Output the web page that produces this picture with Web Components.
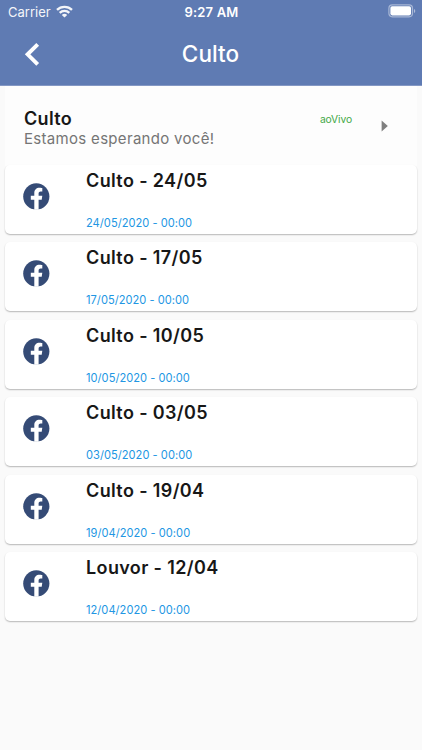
<!DOCTYPE html>
<html lang="pt-BR">
<head>
<meta charset="utf-8">
<title>Culto</title>
<style>
html,body{margin:0;height:100%;overflow:hidden;background:#fafafa;font-family:Inter,"Liberation Sans",sans-serif}
</style>
</head>
<body>
<culto-app></culto-app>
<script>
const define = (name, html, setup) => customElements.define(name, class extends HTMLElement {
  connectedCallback() {
    if (this.shadowRoot) return;
    this.attachShadow({mode: 'open'}).innerHTML = html;
    if (setup) setup(this, this.shadowRoot);
  }
});

define('status-bar', `<style>
:host{display:grid;grid-template-columns:1fr auto 1fr;align-items:center;height:24px;padding:0 6px 0 8px;box-sizing:border-box;color:#fff;font-size:13px;line-height:24px}
.left{display:flex;align-items:center;gap:5px;letter-spacing:.02px;opacity:.93}
.time{font-weight:600;font-size:13px;letter-spacing:.15px;margin-right:1px}
.right{display:flex;justify-content:flex-end}
svg{display:block}
.left svg{margin-top:-1px}
.right svg{margin-top:-2px}
</style>
<div class="left"><span>Carrier</span>
<svg width="17" height="13" viewBox="0 0 17 13" fill="none" stroke="#fff" stroke-width="2.3"><path d="M1 4.9C5 .8 12 .8 16 4.9M3.7 7.8C6.4 5.2 10.6 5.2 13.3 7.8"/><path d="M8.5 12.6L5.8 9.9C7.3 8.5 9.7 8.5 11.2 9.9Z" fill="#fff" stroke="none"/></svg></div>
<div class="time">9:27 AM</div>
<div class="right"><svg width="28" height="14" viewBox="0 0 28 14"><rect x=".9" y=".9" width="23.6" height="11.9" rx="3.5" fill="none" stroke="#fff" stroke-opacity=".45" stroke-width="1.2"/><rect x="2.4" y="2.3" width="20.6" height="9.1" rx="1.8" fill="#fff"/><path d="M26 4.9c1.7.7 1.7 3.3 0 4z" fill="#fff" fill-opacity=".5"/></svg></div>`);

define('nav-bar', `<style>
:host{display:grid;grid-template-columns:60px 1fr 60px;align-items:center;height:60px;color:#fff}
svg{display:block;margin-left:23.5px}
h1{margin:0 1px 0 0;text-align:center;font-size:22.5px;line-height:30px;font-weight:500;letter-spacing:.05px}
</style>
<svg width="17" height="24" viewBox="0 0 17 24" fill="none" stroke="#fff" stroke-width="3.9"><path d="M13.7 2.3L3.6 12.3L13.7 22.3"/></svg>
<h1><slot></slot></h1>`);

define('live-banner', `<style>
:host{display:grid;grid-template-columns:1fr auto auto;height:80px;margin:0 5px;padding:22px 29px 0 19px;box-sizing:border-box;background:#fdfdfd}
b{display:block;font-size:18px;line-height:22px;font-weight:600;color:#171717;letter-spacing:.35px}
span{display:block;font-size:15px;line-height:18px;color:#757575;letter-spacing:.31px}
.live{font-size:10.3px;line-height:22px;color:#43a847;margin-right:29px;letter-spacing:-.12px}
svg{display:block;margin-top:12px}
</style>
<div><b><slot></slot></b><span><slot name="detail"></slot></span></div>
<div class="live"><slot name="live"></slot></div>
<svg width="7" height="12" viewBox="0 0 7 12"><path d="M.6.4L6.8 6L.6 11.6Z" fill="#7f7f7f"/></svg>`);

define('facebook-icon', `<style>:host{display:block;width:27px;height:27px}svg{display:block}</style>
<svg width="27" height="27" viewBox="0 0 27 27"><circle cx="13.3" cy="13.4" r="13.1" fill="#354b76"/><path d="M11.3 26.7V16.8H7.8V12.7H11.3V10.1C11.3 6.7 13.4 4.8 16.5 4.8C18 4.8 19.3 5.1 19.3 5.1V8.5H17.7C16.1 8.5 15.6 9.5 15.6 10.5V12.7H19.3L18.7 16.8H15.6V26.7Z" fill="#fff"/></svg>`);

define('event-card', `<style>
:host{display:grid;grid-template-columns:63px 1fr;align-items:center;height:69px;padding-left:18px;box-sizing:border-box;background:#fff;border-radius:5px;box-shadow:0 1px 1.5px rgba(0,0,0,.24),0 1px 2px rgba(0,0,0,.04)}
facebook-icon{margin-top:-6px}
.text{height:69px;display:flex;flex-direction:column;justify-content:space-between;padding:5px 0 2px;box-sizing:border-box}
b{font-size:18px;line-height:22px;font-weight:600;color:#171717;letter-spacing:.37px}
time{font-size:11.1px;line-height:18px;color:#2196e3;letter-spacing:.03px}
</style>
<facebook-icon></facebook-icon><div class="text"><b><slot></slot></b><time></time></div>`,
(host, root) => { root.querySelector('time').textContent = host.getAttribute('date') + ' - 00:00'; });

define('culto-app', `<style>
:host{display:block;height:750px;overflow:hidden;background:#fafafa}
header{background:#5f7bb3;height:85px;border-bottom:1px solid #8498c4}
main{display:block}
.list{display:grid;gap:8.5px;padding:0 5px;margin-top:-1.5px}
</style>
<header><status-bar></status-bar><nav-bar>Culto</nav-bar></header>
<main>
<live-banner>Culto<span slot="detail">Estamos esperando você!</span><span slot="live">aoVivo</span></live-banner>
<div class="list">
<event-card date="24/05/2020">Culto - 24/05</event-card>
<event-card date="17/05/2020">Culto - 17/05</event-card>
<event-card date="10/05/2020">Culto - 10/05</event-card>
<event-card date="03/05/2020">Culto - 03/05</event-card>
<event-card date="19/04/2020">Culto - 19/04</event-card>
<event-card date="12/04/2020">Louvor - 12/04</event-card>
</div>
</main>`);
</script>
</body>
</html>
